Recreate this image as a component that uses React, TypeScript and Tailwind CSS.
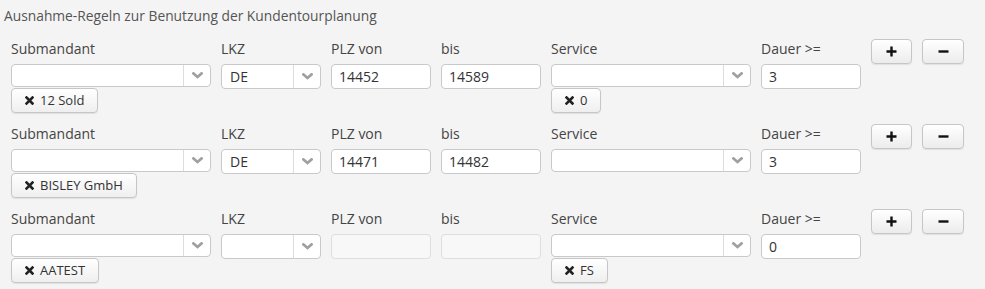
import React from "react";

const Chevron = () => (
  <svg width="11" height="7" viewBox="0 0 11 7" className="block">
    <polyline points="1.5,1.5 5.5,5 9.5,1.5" fill="none" stroke="#a0a0a0" strokeWidth="2.8" strokeLinecap="square" />
  </svg>
);

const XIcon = () => (
  <svg width="9" height="9" viewBox="0 0 9 9" className="block">
    <path d="M1.5 1.5 L7.5 7.5 M7.5 1.5 L1.5 7.5" stroke="#222" strokeWidth="2.6" strokeLinecap="square" />
  </svg>
);

function Select({ value, w, h }: { value?: string; w: string; h: string }) {
  return (
    <div className={`${w} ${h} flex bg-white border border-[#c9c9c9] rounded-[4px] box-border`}>
      <div className="flex-1 flex items-center pl-[8px] text-[14px] text-[#333]">{value}</div>
      <div className="w-[27px] border-l border-[#dcdcdc] flex items-center justify-center">
        <Chevron />
      </div>
    </div>
  );
}

function Input({ value, disabled }: { value?: string; disabled?: boolean }) {
  return (
    <div
      className={
        disabled
          ? "w-[100px] h-[25px] bg-[#f8f8f8] border border-[#dedede] rounded-[4px] box-border"
          : "w-[100px] h-[25px] bg-white border border-[#c9c9c9] rounded-[4px] box-border flex items-center pl-[7px] text-[14px] text-[#333]"
      }
    >
      {value}
    </div>
  );
}

function Tag({ label }: { label: string }) {
  return (
    <div className="mt-[1px] self-start h-[25px] flex items-center gap-[6px] pl-[13px] pr-[13px] rounded-[4px] border border-[#c6c6c6] bg-gradient-to-b from-white to-[#efefef] shadow-[0_1px_1px_rgba(0,0,0,0.08)] text-[13px] text-[#333] box-border">
      <XIcon />
      <span>{label}</span>
    </div>
  );
}

function Label({ text }: { text: string }) {
  return <div className="h-[25px] leading-[20px] text-[14px] text-[#444]">{text}</div>;
}

function Btn({ children, w }: { children: React.ReactNode; w: string }) {
  return (
    <div
      className={`${w} h-[25px] flex items-center justify-center rounded-[4px] border border-[#c6c6c6] bg-gradient-to-b from-white to-[#ececec] shadow-[0_1px_1px_rgba(0,0,0,0.08)] box-border`}
    >
      {children}
    </div>
  );
}

const Plus = () => (
  <svg width="11" height="11" viewBox="0 0 11 11" className="block">
    <path d="M5.5 0.5 V10.5 M0.5 5.5 H10.5" stroke="#111" strokeWidth="2.4" />
  </svg>
);
const Minus = () => (
  <svg width="11" height="11" viewBox="0 0 11 11" className="block">
    <path d="M0.5 5.5 H10.5" stroke="#111" strokeWidth="2.4" />
  </svg>
);

type Row = {
  sub?: string;
  lkz?: string;
  von?: string;
  bis?: string;
  service?: string;
  dauer: string;
  disabled?: boolean;
};

const rows: Row[] = [
  { sub: "12 Sold", lkz: "DE", von: "14452", bis: "14589", service: "0", dauer: "3" },
  { sub: "BISLEY GmbH", lkz: "DE", von: "14471", bis: "14482", dauer: "3" },
  { sub: "AATEST", service: "FS", dauer: "0", disabled: true },
];

export default function App() {
  return (
    <div className="w-[985px] h-[289px] bg-[#f4f4f4] overflow-hidden" style={{ fontFamily: '"Open Sans", sans-serif' }}>
      <div className="pl-[4px] pt-[6px] h-[39px] leading-[20px] text-[13.8px] text-[#555]">
        Ausnahme-Regeln zur Benutzung der Kundentourplanung
      </div>
      <div className="flex flex-col gap-[11px] pl-[11px]">
        {rows.map((r, i) => (
          <div key={i} className="flex gap-[10px] h-[74px]">
            <div className="flex flex-col w-[200px]">
              <Label text="Submandant" />
              <Select w="w-[200px]" h="h-[23px]" />
              {r.sub && <Tag label={r.sub} />}
            </div>
            <div className="flex flex-col w-[100px]">
              <Label text="LKZ" />
              <Select w="w-[100px]" h="h-[25px]" value={r.lkz} />
            </div>
            <div className="flex flex-col w-[100px]">
              <Label text="PLZ von" />
              <Input value={r.von} disabled={r.disabled} />
            </div>
            <div className="flex flex-col w-[100px]">
              <Label text="bis" />
              <Input value={r.bis} disabled={r.disabled} />
            </div>
            <div className="flex flex-col w-[200px]">
              <Label text="Service" />
              <Select w="w-[200px]" h="h-[23px]" />
              {r.service && <Tag label={r.service} />}
            </div>
            <div className="flex flex-col w-[100px]">
              <Label text="Dauer >=" />
              <Input value={r.dauer} />
            </div>
            <div className="flex gap-[10px] items-start">
              <Btn w="w-[41px]">
                <Plus />
              </Btn>
              <Btn w="w-[42px]">
                <Minus />
              </Btn>
            </div>
          </div>
        ))}
      </div>
    </div>
  );
}
